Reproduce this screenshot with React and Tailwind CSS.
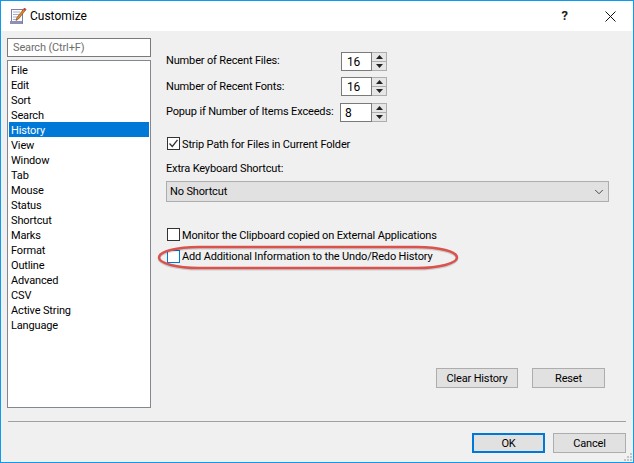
import { ChevronDown } from 'lucide-react';

const font = { fontFamily: 'Roboto, "Liberation Sans", sans-serif' };
const items = ['File', 'Edit', 'Sort', 'Search', 'History', 'View', 'Window', 'Tab', 'Mouse', 'Status', 'Shortcut', 'Marks', 'Format', 'Outline', 'Advanced', 'CSV', 'Active String', 'Language'];

function AppIcon() {
  return (
    <svg width="18" height="18" viewBox="0 0 18 18" className="mr-[3px]">
      <rect x="2.500" y="2.500" width="11" height="14" fill="#fdfdff" stroke="#7b7fa8" />
      <rect x="1" y="14" width="12" height="3" fill="#8d90b5" />
      <path d="M4 5h7M4 7.500h6M4 10h5M4 12.500h4" stroke="#a9adc9" strokeWidth="1" />
      <path d="M15.500 1 L17 2.500 L9.500 12 L7 13.500 L8 10.500 Z" fill="#e08a2e" stroke="#8a4b1a" strokeWidth="0.7" />
      <path d="M15.500 1 L17 2.500 L16 3.800 L14.400 2.400 Z" fill="#c43c3c" />
    </svg>
  );
}

function Spin({ value, pad = 'pl-[5px]', width = 'w-[31px]' }) {
  return (
    <div className="flex h-[19px]">
      <div className={`${width} border border-[#7a7a7a] bg-white ${pad} text-[12px] leading-[18px] text-black`}>{value}</div>
      <div className="flex w-[15px] flex-col border border-l-0 border-[#adadad] bg-[#e6e6e6]">
        <div className="flex flex-1 items-center justify-center border-b border-[#adadad]">
          <svg width="7" height="4" viewBox="0 0 7 4"><path d="M3.500 0 7 4H0z" fill="#222" /></svg>
        </div>
        <div className="flex flex-1 items-center justify-center">
          <svg width="7" height="4" viewBox="0 0 7 4"><path d="M0 0h7L3.500 4z" fill="#222" /></svg>
        </div>
      </div>
    </div>
  );
}

function Check({ label, checked, focus, nudge }) {
  return (
    <div className="flex h-[13px] items-center">
      <div className={`h-[13px] w-[13px] shrink-0 border ${focus ? 'border-[#0078d7]' : 'border-[#333]'} bg-white`}>
        {checked && (
          <svg width="11" height="11" viewBox="0 0 11 11"><path d="M1.500 5.500 4.300 8.500 9.500 1.800" fill="none" stroke="#333" strokeWidth="1.300" /></svg>
        )}
      </div>
      <span className={`ml-[2px] whitespace-nowrap text-[11px] leading-[15px] text-black ${nudge ? 'pt-[2px]' : ''}`}>{label}</span>
    </div>
  );
}

function Btn({ children, focus, wide }) {
  return (
    <div className={`flex h-[20px] ${wide ? 'w-[82px]' : 'w-[73px]'} items-center justify-center ${focus ? 'border-2 border-[#0078d7]' : 'border border-[#adadad]'} bg-[#e1e1e1] pt-[2px] text-[11px] text-black`}>
      {children}
    </div>
  );
}

export default function App() {
  return (
    <div style={font} className="relative flex h-[463px] w-[634px] flex-col overflow-hidden border border-[#0d9bf2] bg-[#f0f0f0] tracking-[-0.15px]">
      {/* title bar */}
      <div className="flex h-[30px] shrink-0 items-center bg-white pl-[8px] text-[12px] tracking-normal text-black">
        <AppIcon />
        <span>Customize</span>
        <span className="ml-auto mr-[37px] text-[13px] font-bold text-[#222]">?</span>
        <svg width="11" height="11" viewBox="0 0 11 11" className="mr-[17px]"><path d="M.5.5l10 10M10.500.5l-10 10" stroke="#111" strokeWidth="1" /></svg>
      </div>

      <div className="flex h-[377px] shrink-0 pl-[6px] pt-[7px]">
        {/* sidebar */}
        <div className="flex w-[144px] flex-col gap-[3px]">
          <div className="h-[19px] border border-[#7a7a7a] bg-white pl-[5px] text-[11px] leading-[18px] text-[#6d6d6d]">Search (Ctrl+F)</div>
          <div className="flex-1 border border-[#828790] bg-white px-[1px] pt-[1px]">
            {items.map(item => (
              <div key={item} className={`h-[15px] pl-[2px] text-[11px] leading-[17px] ${item === 'History' ? 'bg-[#0078d7] text-white' : 'text-black'}`}>{item}</div>
            ))}
          </div>
        </div>

        {/* settings */}
        <div className="ml-[15px] flex w-[443px] flex-col pt-[14px]">
          <div className="flex h-[19px] items-center justify-between pr-[222px] text-[11px] text-black">
            <span>Number of Recent Files:</span>
            <Spin value="16" />
          </div>
          <div className="mt-[6px] flex h-[19px] items-center justify-between pr-[222px] text-[11px] text-black">
            <span className="pt-[2px]">Number of Recent Fonts:</span>
            <Spin value="16" />
          </div>
          <div className="mt-[7px] flex h-[19px] items-center justify-between pr-[222px] text-[11px] text-black">
            <span className="whitespace-nowrap">Popup if Number of Items Exceeds:</span>
            <Spin value="8" pad="pl-[4px]" width="w-[32px]" />
          </div>
          <div className="mt-[15px] pl-[1px]"><Check label="Strip Path for Files in Current Folder" checked nudge /></div>
          <div className="mt-[11px] text-[11px] leading-[16px] text-black">Extra Keyboard Shortcut:</div>
          <div className="mt-[4px] flex h-[21px] items-center justify-between border border-[#adadad] bg-[#e1e1e1] pl-[3px] pr-[2px] text-[11px] text-black">
            <span className="pt-[2px]">No Shortcut</span>
            <ChevronDown size={14} strokeWidth={1.500} color="#333" />
          </div>
          <div className="mt-[26px] pl-[1px]"><Check label="Monitor the Clipboard copied on External Applications" nudge /></div>
          <div className="mt-[9px] pl-[1px]"><Check label="Add Additional Information to the Undo/Redo History" focus /></div>
          <div className="mt-auto mb-[20px] flex justify-end gap-[14px] pr-[4px]">
            <Btn wide>Clear History</Btn>
            <Btn>Reset</Btn>
          </div>
        </div>
      </div>

      {/* footer */}
      <div className="mx-[7px] mt-[13px] h-px shrink-0 bg-[#a0a0a0]" />
      <div className="mt-[11px] flex justify-end gap-[8px] pr-[7px]">
        <Btn focus>OK</Btn>
        <Btn>Cancel</Btn>
      </div>

      {/* size grip */}
      <svg width="10" height="10" viewBox="0 0 10 10" className="absolute bottom-0 right-0">
        <path d="M7 1h2v2H7zM4 4h2v2H4zM7 4h2v2H7zM1 7h2v2H1zM4 7h2v2H4zM7 7h2v2H7z" fill="#c4c4c4" />
      </svg>

      {/* red annotation */}
      <svg width="304" height="28" viewBox="0 0 304 28" className="absolute left-[155px] top-[243px]">
        <rect x="3" y="4" width="298" height="21" rx="40" ry="10.500" fill="none" stroke="#000" strokeOpacity="0.15" strokeWidth="3" />
        <rect x="3" y="3" width="298" height="21" rx="40" ry="10.500" fill="none" stroke="#d9524c" strokeWidth="2.500" />
      </svg>
    </div>
  );
}
